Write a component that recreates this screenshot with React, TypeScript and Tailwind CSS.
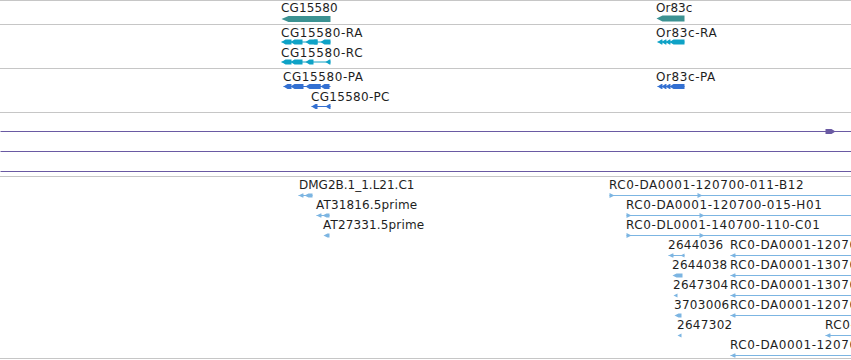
import React from "react";

type Label = { t: string; x: number; cap: number; cls?: string };

const TEAL = "#3c9292";
const CYAN = "#0ea2c6";
const BLUE = "#3370d2";
const PURPLE = "#6a5aa3";
const LIGHT = "#7cb5e2";

const WIDE = "tracking-[0.58px]";
const MID = "tracking-[0.3px]";
const NARROW = "tracking-[0.15px]";

function exon(x0: number, x1: number, cy: number, h: number, key: string, color: string) {
  const a = Math.min(4, x1 - x0);
  const pts = `${x0},${cy} ${x0 + a},${cy - h / 2} ${x1},${cy - h / 2} ${x1},${cy + h / 2} ${x0 + a},${cy + h / 2}`;
  return <polygon key={key} points={pts} fill={color} />;
}

function rightFlag(x: number, cy: number, key: string, color: string) {
  const pts = `${x},${cy - 2.5} ${x + 5},${cy} ${x},${cy + 2.5}`;
  return <polygon key={key} points={pts} fill={color} />;
}

function hline(x0: number, x1: number, cy: number, key: string, color: string) {
  return <line key={key} x1={x0} x2={x1} y1={cy} y2={cy} stroke={color} strokeWidth={1} />;
}

function Labels({ items, top }: { items: Label[]; top: number }) {
  return (
    <>
      {items.map((l) => (
        <span
          key={l.t + l.x + l.cap}
          className={`absolute whitespace-nowrap text-[12px] leading-[12px] text-[#1e1e1e] ${l.cls ?? ""}`}
          style={{ left: l.x, top: l.cap - 1.5 - top }}
        >
          {l.t}
        </span>
      ))}
    </>
  );
}

function Track({
  top,
  height,
  labels,
  children,
}: {
  top: number;
  height: number;
  labels: Label[];
  children?: React.ReactNode;
}) {
  return (
    <div className="relative w-full overflow-hidden" style={{ height }}>
      <svg className="absolute left-0 top-0" width={851} height={height}>
        <g transform={`translate(0.5,${0.5 - top})`}>{children}</g>
      </svg>
      <Labels items={labels} top={top} />
    </div>
  );
}

function Sep() {
  return <div className="h-px w-full bg-[#c6c6c6]" />;
}

export default function App() {
  return (
    <div
      className="w-[851px] h-[360px] overflow-hidden bg-white"
      style={{ fontFamily: '"DejaVu Sans", "Liberation Sans", sans-serif' }}
    >
      <div className="flex flex-col">
        <Sep />
        <Track
          top={1}
          height={23}
          labels={[
            { t: "CG15580", x: 281, cap: 3.5, cls: NARROW },
            { t: "Or83c", x: 656, cap: 3.5 },
          ]}
        >
          <polygon points="281,18.5 288,15.5 330,15.5 330,21.5 288,21.5" fill={TEAL} />
          <polygon points="656,18 662,15 684,15 684,21 662,21" fill={TEAL} />
        </Track>
        <Sep />
        <Track
          top={25}
          height={43}
          labels={[
            { t: "CG15580-RA", x: 281, cap: 28.5, cls: WIDE },
            { t: "CG15580-RC", x: 281, cap: 48, cls: WIDE },
            { t: "Or83c-RA", x: 656, cap: 28.5, cls: WIDE },
          ]}
        >
          {hline(281, 330, 41.5, "ra-l", CYAN)}
          {exon(281, 291, 41.5, 5, "ra1", CYAN)}
          {exon(290, 302, 41.5, 5, "ra2", CYAN)}
          {exon(305, 317, 41.5, 5, "ra3", CYAN)}
          {exon(310, 317, 41.5, 5, "ra3b", CYAN)}
          {exon(320, 330, 41.5, 5, "ra4", CYAN)}
          {hline(281, 330, 61.5, "rc-l", CYAN)}
          {exon(281, 291, 61.5, 5, "rc1", CYAN)}
          {exon(290, 302, 61.5, 5, "rc2", CYAN)}
          {exon(305, 313, 61.5, 5, "rc3", CYAN)}
          {exon(325, 330, 61.5, 5, "rc4", CYAN)}
          {hline(657, 684, 41.5, "or-l", CYAN)}
          {exon(657, 662, 41.5, 5, "or1", CYAN)}
          {exon(661, 666, 41.5, 5, "or2", CYAN)}
          {exon(665, 670, 41.5, 5, "or3", CYAN)}
          {exon(669, 684, 41.5, 5, "or4", CYAN)}
        </Track>
        <Sep />
        <Track
          top={69}
          height={43}
          labels={[
            { t: "CG15580-PA", x: 283, cap: 72.5, cls: WIDE },
            { t: "CG15580-PC", x: 311, cap: 92.5, cls: MID },
            { t: "Or83c-PA", x: 656, cap: 72.5, cls: WIDE },
          ]}
        >
          {hline(283, 330, 86, "pa-l", BLUE)}
          {exon(283, 291, 86, 5, "pa1", BLUE)}
          {exon(290, 303, 86, 5, "pa2", BLUE)}
          {exon(305, 320, 86, 5, "pa3", BLUE)}
          {exon(311, 320, 86, 5, "pa3b", BLUE)}
          {exon(320, 329, 86, 5, "pa4", BLUE)}
          {hline(311, 330, 106, "pc-l", BLUE)}
          {exon(311, 317, 106, 5, "pc1", BLUE)}
          {exon(325, 330, 106, 5, "pc2", BLUE)}
          {hline(657, 684, 86, "orp-l", BLUE)}
          {exon(657, 662, 86, 5, "orp1", BLUE)}
          {exon(661, 666, 86, 5, "orp2", BLUE)}
          {exon(665, 670, 86, 5, "orp3", BLUE)}
          {exon(669, 684, 86, 5, "orp4", BLUE)}
        </Track>
        <Sep />
        <Track top={113} height={63} labels={[]}>
          {hline(0, 851, 131, "p1", PURPLE)}
          <polygon points="825,128.5 831,128.5 835,131 831,133.5 825,133.5" fill={PURPLE} />
          {hline(0, 851, 151, "p2", PURPLE)}
          {hline(0, 851, 171, "p3", PURPLE)}
        </Track>
        <Sep />
        <Track
          top={177}
          height={181}
          labels={[
            { t: "DMG2B.1_1.L21.C1", x: 299, cap: 180 },
            { t: "AT31816.5prime", x: 316, cap: 200, cls: NARROW },
            { t: "AT27331.5prime", x: 323, cap: 220, cls: NARROW },
            { t: "RC0-DA0001-120700-011-B12", x: 609, cap: 180, cls: WIDE },
            { t: "RC0-DA0001-120700-015-H01", x: 626, cap: 200, cls: WIDE },
            { t: "RC0-DL0001-140700-110-C01", x: 626, cap: 220, cls: WIDE },
            { t: "2644036", x: 668, cap: 240, cls: MID },
            { t: "RC0-DA0001-120700", x: 730, cap: 240, cls: WIDE },
            { t: "2644038", x: 672, cap: 260, cls: MID },
            { t: "RC0-DA0001-130700", x: 730, cap: 260, cls: WIDE },
            { t: "2647304", x: 673, cap: 280, cls: MID },
            { t: "RC0-DA0001-130700", x: 730, cap: 280, cls: WIDE },
            { t: "3703006", x: 674, cap: 300, cls: MID },
            { t: "RC0-DA0001-120700", x: 730, cap: 300, cls: WIDE },
            { t: "2647302", x: 677, cap: 320, cls: MID },
            { t: "RC0-DA0001", x: 825, cap: 320, cls: WIDE },
            { t: "RC0-DA0001-120700", x: 730, cap: 340, cls: WIDE },
          ]}
        >
          {hline(298, 312, 195, "d-l", LIGHT)}
          {exon(298, 303, 195, 4, "d1", LIGHT)}
          {exon(304, 312, 195, 4, "d2", LIGHT)}
          {hline(316, 329, 215, "a-l", LIGHT)}
          {exon(316, 321, 215, 4, "a1", LIGHT)}
          {exon(322, 329, 215, 4, "a2", LIGHT)}
          {exon(323, 329, 235, 4, "b1", LIGHT)}

          {hline(609, 851, 195, "r1", LIGHT)}
          {rightFlag(609, 195, "r1a", LIGHT)}
          {rightFlag(697, 195, "r1b", LIGHT)}
          {hline(626, 851, 215, "r2", LIGHT)}
          {rightFlag(626, 215, "r2a", LIGHT)}
          {rightFlag(699, 215, "r2b", LIGHT)}
          {hline(626, 851, 235, "r3", LIGHT)}
          {rightFlag(626, 235, "r3a", LIGHT)}
          {rightFlag(699, 235, "r3b", LIGHT)}

          {hline(668, 684, 255, "g1l", LIGHT)}
          {exon(668, 673, 255, 4, "g1a", LIGHT)}
          {exon(680, 684, 255, 4, "g1b", LIGHT)}
          {hline(730, 851, 255, "s1", LIGHT)}
          {exon(730, 735, 255, 4, "s1a", LIGHT)}

          {exon(672, 682, 275, 4, "g2", LIGHT)}
          {hline(730, 851, 275, "s2", LIGHT)}
          {exon(730, 735, 275, 4, "s2a", LIGHT)}

          {exon(673, 677, 295, 4, "g3", LIGHT)}
          {hline(730, 851, 295, "s3", LIGHT)}
          {exon(730, 735, 295, 4, "s3a", LIGHT)}

          {exon(674, 681, 315, 4, "g4", LIGHT)}
          {hline(730, 851, 315, "s4", LIGHT)}
          {exon(730, 735, 315, 4, "s4a", LIGHT)}

          {exon(677, 681, 335, 4, "g5", LIGHT)}
          {hline(825, 851, 335, "s5", LIGHT)}
          {exon(825, 830, 335, 4, "s5a", LIGHT)}

          {hline(730, 851, 355, "s6", LIGHT)}
          {exon(730, 735, 355, 4, "s6a", LIGHT)}
        </Track>
        <Sep />
      </div>
    </div>
  );
}
